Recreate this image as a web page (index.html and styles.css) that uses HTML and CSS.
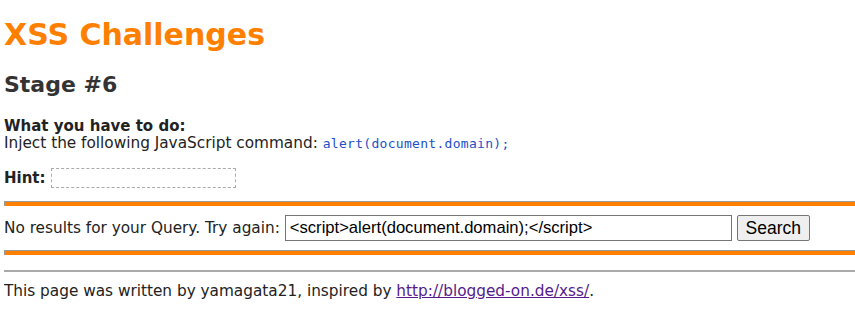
FILE: index.html
```html
<!DOCTYPE html>
<html lang="en">
<head>
    <meta charset="UTF-8">
    <title>XSS Challenges (by yamagata21) - Stage #6</title>
    <link rel="stylesheet" href="styles.css">
</head>
<body>
    <h1 class="title">XSS Challenges</h1>
    <h2 class="stage">Stage #6</h2>

    <!-- Task -->
    <div class="task">
        <b>What you have to do:</b><br>
        Inject the following JavaScript command: <code>alert(document.domain);</code>
    </div>

    <div class="hint">
        <b>Hint:</b>
        <span class="hint-box"></span>
    </div>

    <hr class="bar">

    <!-- Search form -->
    <form class="search" onsubmit="return false;">
        <span>No results for your Query. Try again:</span>
        <input type="text" class="query" value="&lt;script&gt;alert(document.domain);&lt;/script&gt;">
        <input type="submit" class="search-btn" value="Search">
    </form>

    <hr class="bar">
    <hr class="rule">

    <p class="footer">This page was written by yamagata21, inspired by <a href="#">http://blogged-on.de/xss/</a>.</p>
</body>
</html>
```

FILE: styles.css
```css
/* Page */
body {
    margin: 0 0 0 4px;
    font-family: "DejaVu Sans", Verdana, sans-serif;
    font-size: 15.3px;
    color: #222;
    background: #fff;
}

/* Headings */
.title {
    color: #ff7f00;
    font-size: 30px;
    margin: 17px 0 0;
}

.stage {
    font-size: 22px;
    margin: 20px 0 0;
    color: #333;
}

/* Task text */
.task {
    margin-top: 21px;
    line-height: 17px;
}

.task b {
    font-size: 15px;
}

.task code {
    font-family: "DejaVu Sans Mono", monospace;
    font-size: 13px;
    letter-spacing: 0.3px;
    color: #2250c8;
}

.hint {
    margin-top: 16px;
    display: flex;
    align-items: center;
    gap: 5px;
}

.hint b {
    font-size: 15px;
}

.hint-box {
    display: inline-block;
    width: 183px;
    height: 18px;
    border: 1px dashed #aaa;
}

/* Orange bars */
.bar {
    margin: 13px 0 0;
    height: 5px;
    border: none;
    border-top: 1px solid #999;
    border-left: 1px solid #999;
    background: #ff7f00;
    box-sizing: border-box;
}

/* Search row */
.search {
    display: flex;
    align-items: center;
    gap: 5px;
    padding: 9px 0 9px;
}

.query {
    width: 447px;
    height: 26px;
    box-sizing: border-box;
    font-family: "Liberation Sans", Arial, sans-serif;
    font-size: 16.6px;
    padding: 0 4px;
    border: 1px solid #767676;
    margin: 0;
}

.search-btn {
    width: 73px;
    height: 26px;
    font-family: "Liberation Sans", Arial, sans-serif;
    font-size: 17.5px;
    padding: 0;
    background: #efefef;
    border: 1px solid #767676;
    border-radius: 2px;
    margin: 0;
}

.search + .bar {
    margin-top: 0;
}

/* Footer */
.rule {
    margin: 15px 0 0;
    border: none;
    border-top: 2px solid #aaa;
}

.footer {
    margin: 10px 0;
}

.footer a {
    color: #551a8b;
}
```
